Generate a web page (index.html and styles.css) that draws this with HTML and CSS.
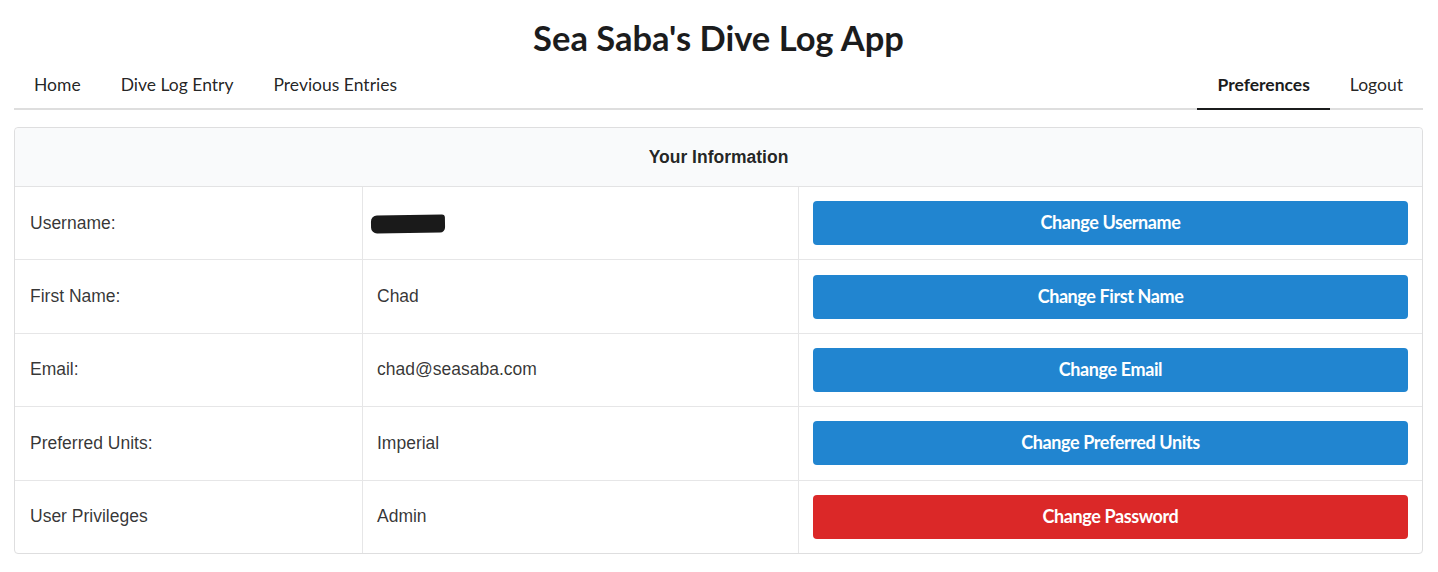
FILE: index.html
```html
<!DOCTYPE html>
<html>
<head>
<meta charset="utf-8">
<link rel="stylesheet" href="styles.css">
</head>
<body>
<div class="page">
  <h1 class="title">Sea Saba's Dive Log App</h1>
  <nav class="menu">
    <div class="menu-left">
      <a class="item">Home</a>
      <a class="item">Dive Log Entry</a>
      <a class="item">Previous Entries</a>
    </div>
    <div class="menu-right">
      <a class="item active">Preferences</a>
      <a class="item">Logout</a>
    </div>
  </nav>
  <table class="info">
    <colgroup>
      <col class="col1">
      <col class="col2">
      <col class="col3">
    </colgroup>
    <thead>
      <tr><th colspan="3">Your Information</th></tr>
    </thead>
    <tbody>
      <tr>
        <td class="c1">Username:</td>
        <td class="c2"><span class="redacted"></span></td>
        <td class="c3"><button class="btn blue">Change Username</button></td>
      </tr>
      <tr>
        <td class="c1">First Name:</td>
        <td class="c2">Chad</td>
        <td class="c3"><button class="btn blue">Change First Name</button></td>
      </tr>
      <tr>
        <td class="c1">Email:</td>
        <td class="c2">chad@seasaba.com</td>
        <td class="c3"><button class="btn blue">Change Email</button></td>
      </tr>
      <tr>
        <td class="c1">Preferred Units:</td>
        <td class="c2">Imperial</td>
        <td class="c3"><button class="btn blue">Change Preferred Units</button></td>
      </tr>
      <tr>
        <td class="c1">User Privileges</td>
        <td class="c2">Admin</td>
        <td class="c3"><button class="btn red">Change Password</button></td>
      </tr>
    </tbody>
  </table>
</div>
</body>
</html>
```

FILE: styles.css
```css
html, body {
  margin: 0;
  padding: 0;
  background: #fff;
}
.page {
  padding: 14px 15px 14px 14px;
  font-family: Lato, "Liberation Sans", sans-serif;
  color: rgba(0,0,0,0.87);
}
.title {
  margin: 0;
  text-align: center;
  font-family: Lato, sans-serif;
  font-weight: 700;
  font-size: 34.5px;
  line-height: 48px;
  color: #1b1c1d;
}
.menu {
  display: flex;
  justify-content: space-between;
  border-bottom: 2px solid #dedede;
}
.menu-left, .menu-right {
  display: flex;
}
.item {
  display: block;
  padding: 0 20px;
  height: 46px;
  line-height: 46px;
  font-size: 17.5px;
  color: rgba(0,0,0,0.87);
  margin-bottom: -2px;
  border-bottom: 2px solid transparent;
  cursor: pointer;
}
.item.active {
  font-weight: 700;
  border-bottom-color: #1b1c1d;
  color: #1b1c1d;
}
.info {
  margin-top: 17px;
  width: 100%;
  table-layout: fixed;
  border-collapse: separate;
  border-spacing: 0;
  border: 1px solid #dededf;
  border-radius: 4px;
  font-family: "Liberation Sans", Arial, sans-serif;
  font-size: 17.5px;
  color: rgba(0,0,0,0.8);
}
.col1 { width: 347px; }
.col2 { width: 436px; }
.info th {
  background: #f9fafb;
  height: 58px;
  padding: 0;
  font-weight: 700;
  text-align: center;
  border-bottom: 1px solid #e3e3e4;
  border-radius: 4px 4px 0 0;
  color: rgba(0,0,0,0.87);
}
.info td {
  height: 44px;
  padding: 14.2px 14px 14.2px 15px;
  border-top: 1px solid #e6e6e7;
  vertical-align: middle;
}
.info tbody tr:first-child td {
  border-top: none;
}
.info td.c2 { border-left: 1px solid #e6e6e7; padding-left: 14px; }
.info td.c3 { border-left: 1px solid #e6e6e7; padding-left: 14px; }
.redacted {
  display: inline-block;
  width: 74px;
  height: 18px;
  background: #1a1a1a;
  border-radius: 6px 3px 5px 6px;
  transform: rotate(-1deg);
  vertical-align: middle;
  margin-left: -6px;
}
.btn {
  display: block;
  width: 100%;
  height: 44px;
  padding: 0 0 2px 0;
  border: none;
  border-radius: 4px;
  color: #fff;
  font-family: Lato, sans-serif;
  font-weight: 700;
  font-size: 18px;
  letter-spacing: -0.4px;
  cursor: pointer;
}
.btn.blue { background: #2185d0; }
.btn.red { background: #db2828; }
```
